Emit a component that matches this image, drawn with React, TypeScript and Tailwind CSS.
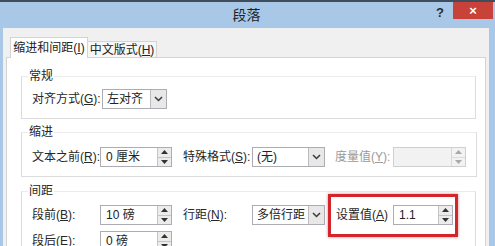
import React from "react";

const FONT = "font-['Liberation_Sans','Noto_Sans_CJK_SC',sans-serif]";

function Chevron() {
  return (
    <svg width="9" height="6" viewBox="0 0 9 6">
      <path d="M1 1 L4.5 4.5 L8 1" fill="none" stroke="#3a3a3a" strokeWidth="1.5" />
    </svg>
  );
}

function Tri({ up, disabled }: { up?: boolean; disabled?: boolean }) {
  return (
    <svg width="7" height="4" viewBox="0 0 7 4">
      <path d={up ? "M0 4 L3.5 0 L7 4 Z" : "M0 0 L3.5 4 L7 0 Z"} fill={disabled ? "#a8a8a8" : "#333"} />
    </svg>
  );
}

function Select({ text, w }: { text: string; w: string }) {
  return (
    <div className={`${w} h-[20px] flex border border-[#abadb3] bg-white`}>
      <span className="flex-1 pl-[4px] leading-[18px] text-[12px] text-[#222]">{text}</span>
      <div className="w-[16px] flex items-center justify-center bg-[#e8e8e8] border-l border-[#bcbcbc]">
        <Chevron />
      </div>
    </div>
  );
}

function Spin({ text, w, disabled }: { text: string; w: string; disabled?: boolean }) {
  return (
    <div
      className={`${w} h-[20px] flex border ${
        disabled ? "border-[#cfcfcf] bg-[#f2f2f2]" : "border-[#abadb3] bg-white"
      }`}
    >
      <span className="flex-1 pl-[5px] leading-[18px] text-[12px] text-[#222]">{text}</span>
      <div className={`w-[14px] flex flex-col border-l ${disabled ? "border-[#d8d8d8]" : "border-[#c4c4c4]"}`}>
        <div className={`flex-1 flex items-center justify-center border-b ${disabled ? "bg-[#f2f2f2] border-[#dcdcdc]" : "bg-[#ececec] border-[#c4c4c4]"}`}>
          <Tri up disabled={disabled} />
        </div>
        <div className={`flex-1 flex items-center justify-center ${disabled ? "bg-[#f2f2f2]" : "bg-[#ececec]"}`}>
          <Tri disabled={disabled} />
        </div>
      </div>
    </div>
  );
}

function Label({ main, acc, tail = "):", w, gray }: { main: string; acc: string; tail?: string; w: string; gray?: boolean }) {
  return (
    <span className={`${w} shrink-0 text-[12px] whitespace-nowrap ${gray ? "text-[#9a9a9a]" : "text-[#262626]"}`}>
      {main}(<u>{acc}</u>{tail}
    </span>
  );
}

function Legend({ text }: { text: string }) {
  return <legend className="ml-[-4px] px-[1px] text-[12px] leading-[16px] text-[#262626]">{text}</legend>;
}

export default function App() {
  return (
    <div className={`w-[495px] h-[246px] overflow-hidden bg-[#a9c8e8] flex flex-col ${FONT}`}>
      <div className="h-[2px] bg-[#3f4d5e] shrink-0" />
      <div className="h-[26px] shrink-0 flex items-start">
        <div className="flex-1 basis-0" />
        <span className="mt-[4px] text-[14px] leading-[18px] text-[#1f1f1f]">段落</span>
        <div className="flex-1 basis-0 flex justify-end items-start pr-[2px]">
          <span className="mt-[3px] mr-[9px] text-[13px] font-bold text-[#2b2b2b] leading-[16px]">?</span>
          <div className="w-[40px] h-[17px] bg-[#c8423a] flex items-center justify-center text-white text-[13px] font-bold leading-none">
            ×
          </div>
        </div>
      </div>
      <div className="flex-1 flex flex-col ml-[3px] w-[486px] bg-[#f0f0f0] pl-[3px] pr-[3px] pt-[9px]">
        <div className="flex items-end ml-[4px] relative z-10">
          <div className="w-[78px] h-[21px] -mb-px bg-white border border-b-0 border-[#d4d4d4] flex items-center justify-center text-[12px] text-[#222] whitespace-nowrap">
            缩进和间距(<u>I</u>)
          </div>
          <div className="w-[69px] h-[16px] bg-[#f7f7f7] border border-l-0 border-b-0 border-[#d4d4d4] flex items-center justify-center text-[12px] text-[#222] whitespace-nowrap">
            中文版式(<u>H</u>)
          </div>
        </div>
        <div className="flex-1 bg-white border border-[#d4d4d4] pt-[10px] pl-[14px] pr-[9px]">
          <fieldset className="border border-[#dcdcdc] border-t-[#ebebeb] px-[10px] pt-[5px] pb-[9px]">
            <Legend text="常规" />
            <div className="flex items-center">
              <Label main="对齐方式" acc="G" w="w-[70px]" />
              <Select text="左对齐" w="w-[65px]" />
            </div>
          </fieldset>
          <fieldset className="mt-[5px] border border-[#dcdcdc] border-t-[#ebebeb] px-[10px] pt-[7px] pb-[9px]">
            <Legend text="缩进" />
            <div className="flex items-center">
              <Label main="文本之前" acc="R" w="w-[68px]" />
              <Spin text="0 厘米" w="w-[72px]" />
              <span className="w-[11px]" />
              <Label main="特殊格式" acc="S" w="w-[69px]" />
              <Select text="(无)" w="w-[73px]" />
              <span className="w-[10px]" />
              <Label main="度量值" acc="Y" w="w-[58px]" gray />
              <Spin text="" w="w-[73px]" disabled />
            </div>
          </fieldset>
          <fieldset className="mt-[6px] border border-[#dcdcdc] border-t-[#ebebeb] px-[10px] pt-[6px] pb-[9px]">
            <Legend text="间距" />
            <div className="flex items-center">
              <Label main="段前" acc="B" w="w-[68px]" />
              <Spin text="10 磅" w="w-[72px]" />
              <span className="w-[11px]" />
              <Label main="行距" acc="N" w="w-[69px]" />
              <Select text="多倍行距" w="w-[73px]" />
              <span className="w-[11px]" />
              <div className="relative flex items-center">
                <Label main="设置值" acc="A" tail=")" w="w-[57px]" />
                <Spin text="1.1" w="w-[60px]" />
                <div className="absolute left-[-8px] right-[-5px] top-[-11px] bottom-[-12px] border-[3px] border-[#d3252b] shadow-[0_0_3px_rgba(120,0,0,0.45)]" />
              </div>
            </div>
            <div className="flex items-center mt-[6px]">
              <Label main="段后" acc="E" w="w-[68px]" />
              <Spin text="0 磅" w="w-[72px]" />
            </div>
          </fieldset>
        </div>
      </div>
    </div>
  );
}
